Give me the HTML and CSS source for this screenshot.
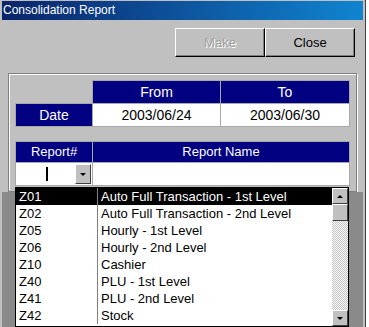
FILE: index.html
```html
<!DOCTYPE html>
<html lang="en">
<head>
    <meta charset="UTF-8">
    <title>Consolidation Report</title>
    <link rel="stylesheet" href="styles.css">
</head>
<body>
    <div class="window">
        <div class="titlebar">Consolidation Report</div>

        <div class="buttons">
            <button class="btn" disabled>Make</button>
            <button class="btn">Close</button>
        </div>

        <div class="group">
            <div class="date-grid">
                <div class="blank"></div>
                <div class="head">From</div>
                <div class="head">To</div>
                <div class="head">Date</div>
                <div class="cell">2003/06/24</div>
                <div class="cell">2003/06/30</div>
            </div>

            <div class="report-grid">
                <div class="head small">Report#</div>
                <div class="head small">Report Name</div>
                <div class="cell combo">
                    <span class="caret"></span>
                    <span class="drop"><span class="arrow down"></span></span>
                </div>
                <div class="cell"></div>
            </div>
        </div>

        <div class="lower"></div>

        <div class="list">
            <div class="rows">
                <div class="row selected"><span class="code">Z01</span><span class="name">Auto Full Transaction - 1st Level</span></div>
                <div class="row"><span class="code">Z02</span><span class="name">Auto Full Transaction - 2nd Level</span></div>
                <div class="row"><span class="code">Z05</span><span class="name">Hourly - 1st Level</span></div>
                <div class="row"><span class="code">Z06</span><span class="name">Hourly - 2nd Level</span></div>
                <div class="row"><span class="code">Z10</span><span class="name">Cashier</span></div>
                <div class="row"><span class="code">Z40</span><span class="name">PLU - 1st Level</span></div>
                <div class="row"><span class="code">Z41</span><span class="name">PLU - 2nd Level</span></div>
                <div class="row"><span class="code">Z42</span><span class="name">Stock</span></div>
            </div>
            <div class="scrollbar">
                <div class="sb-btn"><span class="arrow up"></span></div>
                <div class="sb-btn thumb"></div>
                <div class="track"></div>
                <div class="sb-btn"><span class="arrow down"></span></div>
            </div>
        </div>
    </div>
</body>
</html>
```

FILE: styles.css
```css
body {
    margin: 0;
    background: #ffffff;
    font-family: "Liberation Sans", Arial, sans-serif;
    font-size: 12px;
}
.window {
    position: relative;
    width: 361px;
    height: 326px;
    padding: 1px 2px 0 2px;
    background: #c0c0c0;
    border-right: 1px solid #404040;
    display: flex;
    flex-direction: column;
}
.titlebar {
    height: 19px;
    line-height: 19px;
    padding-left: 1px;
    color: #fff;
    font-size: 12px;
    background: linear-gradient(to right, #0a246a, #1084d0);
}
.buttons {
    display: flex;
    justify-content: flex-end;
    padding: 8px 8px 0 0;
    height: 29px;
}
.btn {
    width: 90px;
    height: 29px;
    margin: 0;
    padding: 0;
    font-family: inherit;
    font-size: 13px;
    color: #000;
    background: #c0c0c0;
    border: 1px solid;
    border-color: #fff #000 #000 #fff;
    box-shadow: inset -1px -1px #808080;
}
.btn:disabled {
    color: #a0a0a0;
    text-shadow: 1px 1px #fff;
}
.group {
    margin: 16px 6px 0 6px;
    height: 119px;
    border: 1px solid #808080;
    box-shadow: inset 1px 1px #fff, 1px 1px #fff;
    padding: 7px 0 0 7px;
    box-sizing: border-box;
}
.date-grid {
    display: grid;
    grid-template-columns: 76px 127px 128px;
    grid-template-rows: 22px 22px;
    gap: 1px;
}
.report-grid {
    display: grid;
    grid-template-columns: 76px 256px;
    grid-template-rows: 20px 22px;
    gap: 1px;
    margin-top: 16px;
}
.head {
    background: #000080;
    color: #fff;
    font-size: 14px;
    text-align: center;
    line-height: 22px;
    outline: 1px solid #a8a8a8;
}
.head.small {
    font-size: 13px;
    line-height: 20px;
}
.cell {
    background: #fff;
    font-size: 14px;
    text-align: center;
    line-height: 22px;
    outline: 1px solid #a8a8a8;
}
.combo {
    position: relative;
}
.caret {
    position: absolute;
    left: 30px;
    top: 4px;
    width: 2px;
    height: 14px;
    background: #000;
}
.drop {
    position: absolute;
    right: 1px;
    top: 1px;
    width: 14px;
    height: 18px;
    background: #c0c0c0;
    border: 1px solid;
    border-color: #fff #404040 #404040 #fff;
    display: flex;
    align-items: center;
    justify-content: center;
}
.arrow {
    width: 0;
    height: 0;
    border-left: 3px solid transparent;
    border-right: 3px solid transparent;
}
.arrow.down {
    border-top: 3px solid #000;
}
.arrow.up {
    border-bottom: 3px solid #000;
}
.lower {
    flex: 1;
    background: #8a8a8a;
}
.list {
    position: absolute;
    left: 15px;
    top: 187px;
    width: 332px;
    height: 138px;
    border: 1px solid #000;
    background: #fff;
    display: flex;
}
.rows {
    flex: 1;
}
.row {
    display: flex;
    height: 17px;
    line-height: 17px;
    font-size: 13px;
    color: #000;
}
.row.selected {
    background: #000;
    color: #fff;
}
.code {
    width: 82px;
    padding-left: 3px;
    box-sizing: border-box;
    border-right: 1px solid #808080;
}
.name {
    padding-left: 3px;
}
.scrollbar {
    width: 16px;
    display: flex;
    flex-direction: column;
}
.sb-btn {
    height: 14px;
    background: #c0c0c0;
    border: 1px solid;
    border-color: #fff #404040 #404040 #fff;
    display: flex;
    align-items: center;
    justify-content: center;
}
.thumb {
    height: 15px;
}
.track {
    flex: 1;
    background: repeating-conic-gradient(#c0c0c0 0 25%, #fff 0 50%) 0 0 / 2px 2px;
}
```
